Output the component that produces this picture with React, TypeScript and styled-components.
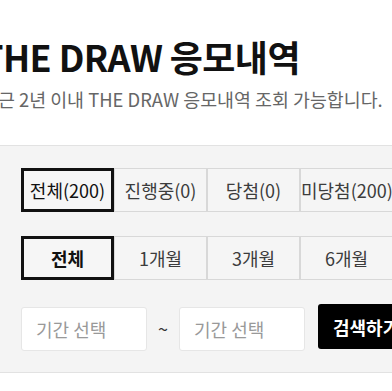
import React, { useState } from "react";
import styled, { createGlobalStyle } from "styled-components";

const GlobalStyle = createGlobalStyle`
  html, body {
    margin: 0;
    padding: 0;
    background: #ffffff;
    overflow: hidden;
  }
  body {
    font-family: "Noto Sans CJK KR", "Noto Sans", sans-serif;
    color: #111;
  }
  * { box-sizing: border-box; }
`;

const Page = styled.div`
  width: 640px;
  margin-left: -19px;
  padding-top: 30px;
`;

const Header = styled.header`
  padding-left: 0;
`;

const Title = styled.h1`
  margin: 0;
  font-size: 36px;
  font-weight: 700;
  line-height: 52px;
  letter-spacing: -0.6px;
  color: #111;
`;

const Subtitle = styled.p`
  margin: 3px 0 0;
  font-size: 18.4px;
  line-height: 28px;
  color: #666;
  letter-spacing: 0;
`;

const Panel = styled.section`
  margin-top: 32px;
  background: #f4f4f4;
  border-top: 1px solid #e2e2e2;
  border-bottom: 1px solid #e2e2e2;
  padding: 22px 40px 21px;
  display: flex;
  flex-direction: column;
  gap: 24px;
`;

const TabRow = styled.div`
  display: flex;
`;

const Tab = styled.button<{ $active?: boolean; $bold?: boolean }>`
  flex: 0 0 93px;
  height: 44px;
  margin: 0;
  padding: 0;
  font-family: inherit;
  font-size: 18px;
  font-weight: ${(p) => (p.$bold ? 700 : 400)};
  letter-spacing: 0;
  white-space: nowrap;
  background: ${(p) => (p.$active ? "#f6f6f6" : "#f5f5f5")};
  border: ${(p) => (p.$active ? "3px solid #111" : "1px solid #d8d8d8")};
  cursor: pointer;
  display: flex;
  align-items: center;
  justify-content: center;
  color: ${(p) => (p.$active ? "#111" : "#3c3c3c")};
`;

const SearchRow = styled.div`
  display: flex;
  align-items: center;
  height: 47px;
`;

const DateField = styled.div`
  width: 126px;
  height: 44px;
  margin-top: 3px;
  background: #fff;
  border: 1px solid #e6e6e6;
  border-radius: 3px;
  padding-left: 14px;
  display: flex;
  align-items: center;
  font-size: 18px;
  color: #999;
  letter-spacing: 0;
`;

const Tilde = styled.span`
  width: 32px;
  text-align: center;
  font-size: 18px;
  line-height: 1;
  color: #333;
  margin-top: 0;
`;

const SearchButton = styled.button`
  margin-left: 13px;
  height: 45px;
  padding: 0 15px;
  background: #000;
  color: #fff;
  border: none;
  border-radius: 3px;
  font-family: inherit;
  font-size: 18px;
  font-weight: 700;
  white-space: nowrap;
  cursor: pointer;
  align-self: flex-start;
`;

const statusTabs = ["전체(200)", "진행중(0)", "당첨(0)", "미당첨(200)"];
const periodTabs = ["전체", "1개월", "3개월", "6개월"];

export default function App() {
  const [status, setStatus] = useState(0);
  const [period, setPeriod] = useState(0);
  return (
    <>
      <GlobalStyle />
      <Page>
        <Header>
          <Title>THE DRAW 응모내역</Title>
          <Subtitle>최근 2년 이내 THE DRAW 응모내역 조회 가능합니다.</Subtitle>
        </Header>
        <Panel>
          <TabRow>
            {statusTabs.map((t, i) => (
              <Tab key={t} $active={status === i} onClick={() => setStatus(i)}>
                {t}
              </Tab>
            ))}
          </TabRow>
          <TabRow>
            {periodTabs.map((t, i) => (
              <Tab
                key={t}
                $active={period === i}
                $bold={period === i}
                onClick={() => setPeriod(i)}
              >
                {t}
              </Tab>
            ))}
          </TabRow>
          <SearchRow>
            <DateField>기간 선택</DateField>
            <Tilde>~</Tilde>
            <DateField>기간 선택</DateField>
            <SearchButton>검색하기</SearchButton>
          </SearchRow>
        </Panel>
      </Page>
    </>
  );
}
